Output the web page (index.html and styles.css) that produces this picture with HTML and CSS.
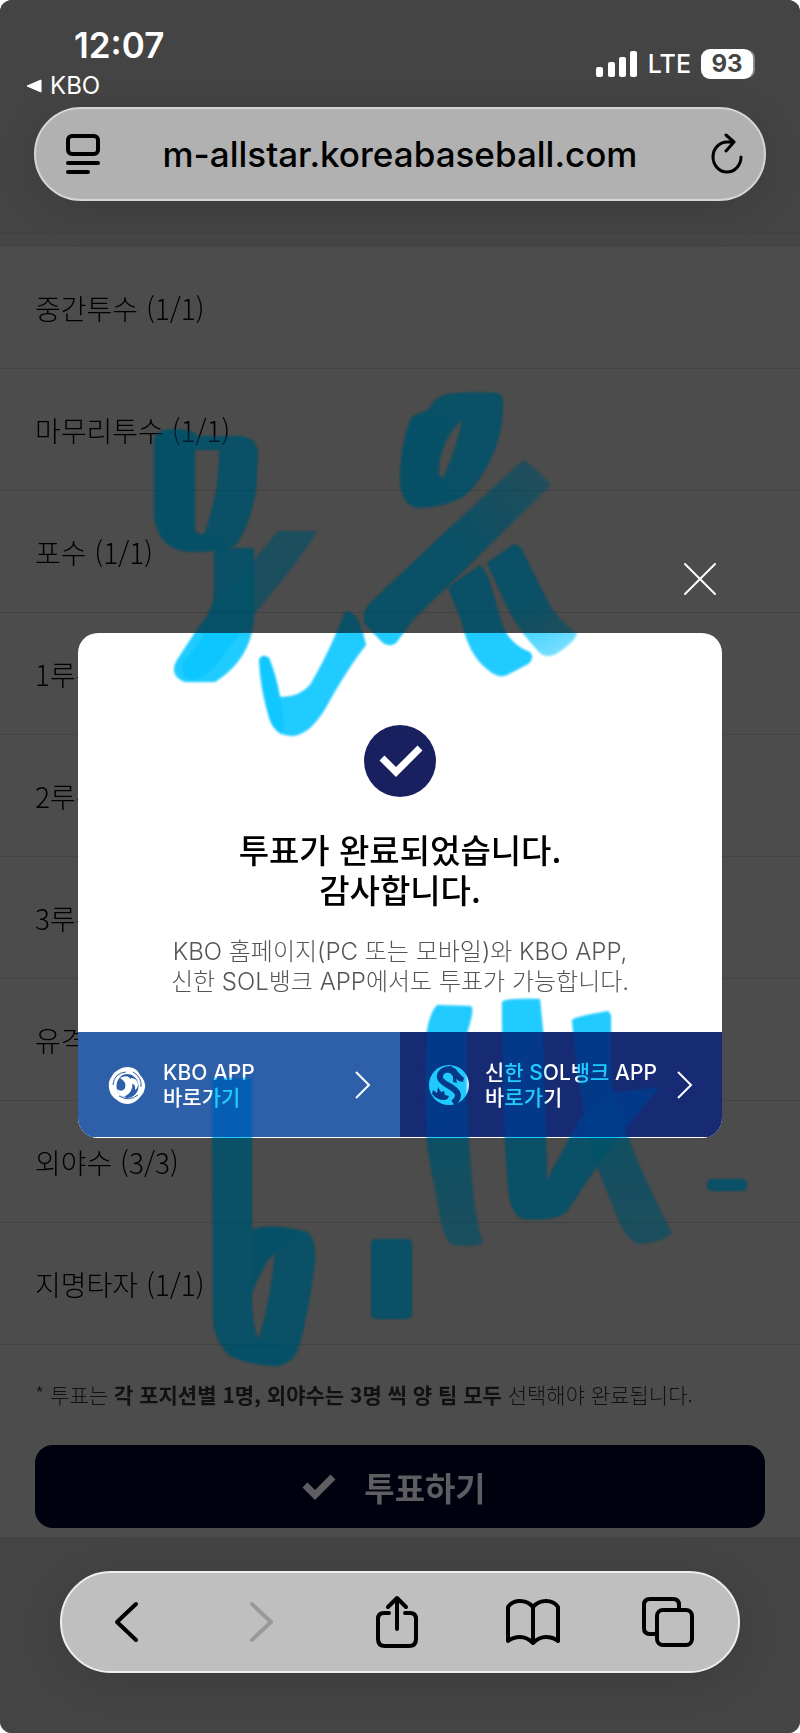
FILE: index.html
```html
<!DOCTYPE html>
<html lang="ko">
<head>
    <meta charset="UTF-8">
    <meta name="viewport" content="width=device-width, initial-scale=1.0">
    <title>KBO 올스타 투표</title>
    <link rel="stylesheet" href="styles.css">
</head>
<body>
<div class="screen">
    <!-- Status bar and address bar -->
    <header class="browser-top">
        <div class="status-bar">
            <div class="status-left">
                <span class="time">12:07</span>
                <a class="back-app" href="#">
                    <svg width="16" height="14" viewBox="0 0 16 14"><path d="M15 1v12L1 7z" fill="#fff" stroke="#fff" stroke-linejoin="round"/></svg>
                    KBO
                </a>
            </div>
            <div class="status-right">
                <svg width="42" height="26" viewBox="0 0 42 26" fill="#fff">
                    <rect x="0" y="16" width="7" height="10" rx="2"/>
                    <rect x="12" y="11" width="7" height="15" rx="2"/>
                    <rect x="23" y="6" width="7" height="20" rx="2"/>
                    <rect x="34" y="0" width="7" height="26" rx="2"/>
                </svg>
                <span class="network">LTE</span>
                <span class="battery">93</span>
            </div>
        </div>
        <div class="address-bar">
            <button class="icon-button" aria-label="페이지 메뉴">
                <svg width="34" height="42" viewBox="0 0 34 42" fill="none" stroke="#000" stroke-width="4" stroke-linecap="round">
                    <rect x="2" y="3" width="30" height="18" rx="4"/>
                    <path d="M2 30h30M2 39h20"/>
                </svg>
            </button>
            <button class="address">m-allstar.koreabaseball.com</button>
            <button class="icon-button" aria-label="새로 고침">
                <svg width="34" height="42" viewBox="0 0 34 42" fill="none" stroke="#000" stroke-width="3" stroke-linecap="round" stroke-linejoin="round">
                    <path d="M31 24a14 15 0 1 1-14-15h7M16 2l8 7-8 9"/>
                </svg>
            </button>
        </div>
    </header>

    <main class="page">
        <ul class="position-list">
            <li>중간투수 (1/1)</li>
            <li>마무리투수 (1/1)</li>
            <li>포수 (1/1)</li>
            <li>1루수 (1/1)</li>
            <li>2루수 (1/1)</li>
            <li>3루수 (1/1)</li>
            <li>유격수 (1/1)</li>
            <li>외야수 (3/3)</li>
            <li>지명타자 (1/1)</li>
        </ul>
        <p class="notice">* 투표는 <strong>각 포지션별 1명, 외야수는 3명 씩 양 팀 모두</strong> 선택해야 완료됩니다.</p>
        <button class="vote-button">
            <svg width="34" height="28" viewBox="0 0 34 28" fill="none" stroke="#5e5e62" stroke-width="7"><path d="M3 12l10 10L31 4"/></svg>
            투표하기
        </button>

        <!-- Vote complete popup -->
        <div class="popup-layer">
            <button class="close-button" aria-label="닫기">
                <svg width="34" height="34" viewBox="0 0 34 34" stroke="#fff" stroke-width="2" stroke-linecap="round"><path d="M2 2l30 30M32 2L2 32"/></svg>
            </button>
            <div class="popup" role="dialog" aria-labelledby="popup-title">
                <div class="popup-body">
                    <svg class="check" width="74" height="74" viewBox="0 0 74 74">
                        <circle cx="37" cy="37" r="36" fill="#18205f"/>
                        <path d="M19 34l14 14 24-24" fill="none" stroke="#fff" stroke-width="7"/>
                    </svg>
                    <h1 id="popup-title">투표가 완료되었습니다.<br>감사합니다.</h1>
                    <p>KBO 홈페이지(PC 또는 모바일)와 KBO APP,<br>신한 SOL뱅크 APP에서도 투표가 가능합니다.</p>
                </div>
                <div class="app-links">
                    <a class="app-link kbo" href="#">
                        <svg width="42" height="42" viewBox="0 0 42 42">
                            <path fill="#fff" fill-rule="evenodd" d="M12 6Q19 1 27 4q5 2 7 7 6 6 5 13-1 5-4 8-5 7-13 8-7 0-11-4Q4 32 3 24q-1-7 3-12 2-4 6-6zM21 10a11 12 0 1 0 1 24 11 12 0 0 0-1-24z"/>
                            <path fill="#fff" d="M14 14q9-5 12 4 2 10-8 15-6-2-7-8 5 4 8-1 2-6-5-10zM25 14q6 0 7 6 0 4-3 6 1-6-3-6-3-2-1-6z"/>
                            <path d="M17 25q2-4-1-7" fill="none" stroke="#2d60a8" stroke-width="2"/>
                            <path d="M7 21Q8 9 20 8M27 8q9 5 8 15M32 31Q23 38 13 32" fill="none" stroke="#2d60a8"/>
                        </svg>
                        <span>KBO APP<br>바로가기</span>
                        <svg class="arrow" width="16" height="28" viewBox="0 0 16 28"><path d="M1 1l13 13L1 27"/></svg>
                    </a>
                    <a class="app-link sol" href="#">
                        <svg width="42" height="42" viewBox="0 0 42 42">
                            <circle cx="21" cy="21" r="20" fill="#fff"/>
                            <path d="M24 5C15 5 11 9 12 14c2 7 17 9 18 17 0 4-2 6-5 8" fill="none" stroke="#172b74" stroke-width="6"/>
                            <path d="M18 4q8-3 12 4l6 6-1 4-4-1-3-2 1 4-4-1v-5q-1-4-7-5zM4 30l1-4 4 3 1-6 3 5 3-1 1 4 4 1q-1 4-5 4-7 0-12-6z" fill="#172b74"/>
                        </svg>
                        <span>신한 SOL뱅크 APP<br>바로가기</span>
                        <svg class="arrow" width="16" height="28" viewBox="0 0 16 28"><path d="M1 1l13 13L1 27"/></svg>
                    </a>
                </div>
            </div>
        </div>
    </main>

    <!-- Browser toolbar -->
    <footer class="browser-bottom">
        <nav class="toolbar">
            <button class="icon-button" aria-label="뒤로">
                <svg width="26" height="44" viewBox="0 0 26 44"><path d="M23 4L4 22l19 18"/></svg>
            </button>
            <button class="icon-button" aria-label="앞으로" disabled>
                <svg width="26" height="44" viewBox="0 0 26 44"><path d="M3 4l19 18L3 40"/></svg>
            </button>
            <button class="icon-button" aria-label="공유">
                <svg width="44" height="54" viewBox="0 0 44 54"><path d="M14 18H9q-6 0-6 6v20q0 7 7 7h24q7 0 7-7V24q0-6-6-6h-5M22 34V4M13 12l9-9 9 9"/></svg>
            </button>
            <button class="icon-button" aria-label="책갈피">
                <svg width="54" height="46" viewBox="0 0 54 46"><path d="M27 8Q22 2 14 2T2 8v34q5-4 12-4t13 6q6-6 13-6t12 4V8q-4-6-12-6T27 8v35"/></svg>
            </button>
            <button class="icon-button" aria-label="탭">
                <svg width="52" height="52" viewBox="0 0 52 52"><rect x="15" y="14" width="35" height="35" rx="6"/><path d="M13 38H8q-6 0-6-6V9q0-6 6-6h23q6 0 6 6v4"/></svg>
            </button>
        </nav>
    </footer>

    <!-- Marker strokes drawn over the page -->
    <svg class="marker marker-ink" viewBox="0 0 800 1733" preserveAspectRatio="none" aria-hidden="true">
        <g id="strokes">
            <path fill-rule="evenodd" d="M154 440Q156 429 175 429Q196 430 197 436L240 436Q258 438 258 455L256 490Q250 525 236 545Q220 552 190 552Q158 550 154 515ZM195 450L195 530Q201 538 205 532Q220 490 219 450Z"/>
            <path d="M154 440Q156 429 175 429Q196 430 195 450V530Q201 538 205 532L236 545Q220 552 190 552Q158 550 154 515Z" opacity=".4"/>
            <path d="M214 548H254V620Q250 660 215 682H185Q168 675 177 660Q190 640 200 625Q214 610 214 590Z"/>
            <path d="M278 531H317Q300 560 256 612L222 658Q208 678 192 680Q178 678 184 660Q205 640 214 608Z" opacity=".7"/>
            <path d="M259 660Q262 653 269 658Q276 675 280 697Q298 698 310 685Q328 655 345 612Q358 608 366 645Q350 665 330 700Q312 735 292 736Q275 735 270 720Q260 690 259 660Z"/>
            <path d="M259 660Q262 653 269 658Q276 675 280 697Q286 720 282 735Q270 728 267 710Z" opacity=".6"/>
            <path fill-rule="evenodd" d="M400 477Q401 440 412 417Q420 412 428 410Q435 397 447 394Q470 391 497 393Q504 395 503 405Q503 435 489 463Q475 488 465 495Q450 506 420 508Q400 507 400 477ZM462 420Q445 435 439 462Q437 482 444 476Q457 448 462 420Z"/>
            <path d="M400 477Q401 440 412 417Q425 412 454 418Q440 440 439 476Q455 495 465 495Q450 506 420 508Q400 507 400 477Z" opacity=".4"/>
            <path d="M523 460Q538 469 551 485L413 620Q404 632 396 643Q388 648 382 642L364 623Q362 612 370 603L440 537Z" fill="url(#fade-slash)"/>
            <path d="M448 587L480 565Q486 570 490 583L503 627Q512 646 530 652Q535 658 528 664L507 675Q498 679 487 669Q469 655 462 623Z"/>
            <path d="M487 563L514 544Q520 545 523 552L547 600Q557 620 577 633Q576 641 556 654Q548 658 541 654Q520 633 507 607Z" fill="url(#fade-down)"/>
            <path fill-rule="evenodd" d="M212 1078H252V1230Q262 1225 284 1227L307 1232Q316 1238 315 1263Q309 1310 299 1347Q292 1366 273 1366Q245 1364 228 1355Q213 1337 213 1317ZM275 1253Q265 1260 252 1293Q252 1325 258 1339Q269 1310 275 1253Z"/>
            <path d="M252 1230Q262 1225 284 1227L307 1232Q290 1245 275 1253Q265 1260 252 1293ZM223 1345Q260 1336 299 1347Q292 1366 273 1366Q235 1364 223 1345Z" opacity=".4"/>
            <rect x="371" y="1239" width="41" height="80" rx="5"/>
            <path d="M437 1005L471 1006Q475 1009 467 1033Q466 1120 472 1180Q475 1220 483 1243Q475 1248 453 1245Q447 1243 442 1227L427 1147Q424 1080 427 1030Q430 1013 437 1005Z" fill="url(#fade-leg)"/>
            <path d="M502 1002Q505 998 540 999L543 1030Q546 1120 547 1180Q560 1155 582 1115L615 1092L660 1087L627 1127Q600 1160 570 1207Q563 1222 523 1219Q512 1215 509 1195Q502 1130 502 1002Z"/>
            <path d="M572 1020Q574 1017 608 1011L611 1015V1080Q623 1130 646 1180Q665 1220 672 1233Q664 1242 638 1244Q625 1238 618 1219L597 1167Q580 1115 572 1020Z" fill="url(#fade-leg)"/>
            <rect x="707" y="1179" width="40" height="12" rx="5"/>
        </g>
        <defs>
            <linearGradient id="fade-slash" gradientUnits="userSpaceOnUse" x1="364" y1="623" x2="540" y2="470">
                <stop offset=".5" stop-color="#00c4ff" stop-opacity=".85"/>
                <stop offset="1" stop-color="#00c4ff" stop-opacity=".5"/>
            </linearGradient>
            <linearGradient id="fade-down" gradientUnits="userSpaceOnUse" x1="510" y1="560" x2="560" y2="650">
                <stop offset=".4" stop-color="#00c4ff" stop-opacity=".85"/>
                <stop offset="1" stop-color="#00c4ff" stop-opacity=".5"/>
            </linearGradient>
            <linearGradient id="fade-leg" gradientUnits="userSpaceOnUse" x1="450" y1="1100" x2="470" y2="1245">
                <stop offset="0" stop-color="#00c4ff" stop-opacity=".85"/>
                <stop offset="1" stop-color="#00c4ff" stop-opacity=".6"/>
            </linearGradient>
        </defs>
    </svg>
    <svg class="marker marker-tint" viewBox="0 0 800 1733" preserveAspectRatio="none" aria-hidden="true">
        <use href="#strokes"/>
    </svg>
</div>
</body>
</html>
```
FILE: styles.css
```css
* {
    box-sizing: border-box;
}
body {
    margin: 0;
    background: #fff;
    font-family: "Noto Sans CJK KR", "Noto Sans", sans-serif;
}
button {
    padding: 0;
    border: none;
    background: none;
    color: inherit;
    font: inherit;
    cursor: pointer;
}
a {
    color: inherit;
    text-decoration: none;
}
svg {
    display: block;
    flex: none;
}
.screen {
    position: relative;
    isolation: isolate;
    background: #4c4c4c;
    border-radius: 12px;
    overflow: hidden;
}

/* Browser top */
.browser-top {
    padding: 25px 34px 46px;
    background: linear-gradient(#444 236px, #4a4a4a 236px, #4a4a4a 237px, #454545 237px);
    font-family: Inter, sans-serif;
}
.status-bar {
    display: flex;
    justify-content: space-between;
    height: 82px;
    padding-right: 13px;
    color: #fff;
}
.time {
    display: block;
    padding-left: 40px;
    font-size: 35px;
    font-weight: 600;
    line-height: 40px;
}
.back-app {
    display: flex;
    align-items: center;
    gap: 8px;
    margin-left: -8px;
    font-size: 24px;
    line-height: 42px;
}
.status-right {
    display: flex;
    align-items: center;
    gap: 10px;
    height: 78px;
}
.network {
    font-size: 25px;
    font-weight: 500;
    line-height: 30px;
}
.battery {
    width: 52px;
    border-radius: 9px;
    background: #fff;
    box-shadow: 3px 0 0 -1px #888;
    color: #444;
    font-size: 24px;
    font-weight: 700;
    line-height: 30px;
    text-align: center;
}
.address-bar {
    display: flex;
    align-items: center;
    height: 94px;
    padding: 0 20px 0 30px;
    background: #b1b1b1;
    border: 2px solid #d5d5d5;
    border-radius: 47px;
    box-shadow: 0 8px 40px rgba(0, 0, 0, 0.12);
}
.address {
    flex: 1;
    padding-right: 10px;
    font-size: 35px;
    font-weight: 500;
    color: #000;
}

/* Page */
.page {
    position: relative;
    padding-bottom: 9px;
    color: #000;
}
.position-list {
    margin: 0;
    padding: 0;
    list-style: none;
}
.position-list li {
    padding: 41px 35px 40px;
    border-bottom: 1px solid #434343;
    font-size: 28px;
    font-weight: 300;
    line-height: 40px;
}
.notice {
    margin: 0;
    padding: 34px 35px 36px;
    color: #111;
    font-size: 21px;
    font-weight: 300;
    line-height: 30px;
}
.notice strong {
    font-weight: 700;
}
.vote-button {
    display: flex;
    align-items: center;
    justify-content: center;
    gap: 28px;
    width: calc(100% - 70px);
    height: 83px;
    margin: 0 35px;
    padding-right: 12px;
    border-radius: 18px;
    background: #00010f;
    color: #5e5e62;
    font-size: 33px;
    font-weight: 700;
    line-height: 40px;
}

/* Popup */
.popup-layer {
    position: absolute;
    inset: 0;
    display: flex;
    flex-direction: column;
    align-items: flex-end;
    padding: 315px 78px 0;
}
.close-button {
    margin: 0 5px 37px;
}
.popup {
    width: 100%;
    padding-bottom: 1px;
    background: #fff;
    border-radius: 20px;
    overflow: hidden;
}
.popup-body {
    padding: 91px 20px 35px;
    text-align: center;
}
.check {
    margin: 0 auto 31px;
}
.popup h1 {
    margin: 0 0 28px;
    color: #000;
    font-size: 33px;
    font-weight: 500;
    line-height: 40px;
}
.popup p {
    margin: 0;
    color: #555;
    font-family: Inter, "Noto Sans CJK KR", sans-serif;
    font-size: 24px;
    font-weight: 300;
    line-height: 30px;
}
.app-links {
    display: flex;
}
.app-link {
    flex: 1;
    display: flex;
    align-items: center;
    gap: 15px;
    height: 105px;
    padding: 0 29px 0 28px;
    color: #fff;
    font-family: Inter, "Noto Sans CJK KR", sans-serif;
    font-size: 21px;
    font-weight: 500;
    line-height: 25px;
    white-space: nowrap;
}
.app-link.kbo {
    background: #2d60a8;
}
.app-link.sol {
    background: #172b74;
}
.arrow {
    margin-left: auto;
    fill: none;
    stroke: #fff;
    stroke-width: 2;
}

/* Browser toolbar */
.browser-bottom {
    padding: 34px 60px 60px;
    background: #444;
}
.toolbar {
    display: flex;
    align-items: center;
    justify-content: space-between;
    height: 102px;
    padding: 0 40px 0 34px;
    background: #bfbfbf;
    border: 2px solid #eee;
    border-radius: 51px;
    box-shadow: 0 8px 40px rgba(0, 0, 0, 0.12);
}
.toolbar .icon-button {
    display: flex;
    justify-content: center;
    width: 60px;
}
.toolbar svg {
    fill: none;
    stroke: #000;
    stroke-width: 4;
    stroke-linecap: round;
    stroke-linejoin: round;
}
.toolbar .icon-button:disabled svg {
    stroke: #999;
}

/* Marker */
.marker {
    position: absolute;
    top: 0;
    left: 0;
    width: 100%;
    height: 100%;
    pointer-events: none;
    fill: rgba(0, 196, 255, 0.85);
    filter: blur(1px);
}
.marker-ink {
    mix-blend-mode: multiply;
}
.marker-tint {
    opacity: 0.17;
}
```
